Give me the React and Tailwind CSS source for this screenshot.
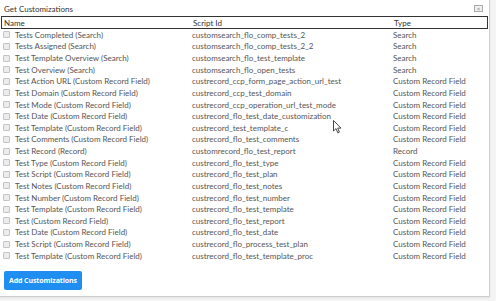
import React from "react";

const rows = [
  ["Tests Completed (Search)", "customsearch_flo_comp_tests_2", "Search"],
  ["Tests Assigned (Search)", "customsearch_flo_comp_tests_2_2", "Search"],
  ["Test Template Overview (Search)", "customsearch_flo_test_template", "Search"],
  ["Test Overview (Search)", "customsearch_flo_open_tests", "Search"],
  ["Test Action URL (Custom Record Field)", "custrecord_ccp_form_page_action_url_test", "Custom Record Field"],
  ["Test Domain (Custom Record Field)", "custrecord_ccp_test_domain", "Custom Record Field"],
  ["Test Mode (Custom Record Field)", "custrecord_ccp_operation_url_test_mode", "Custom Record Field"],
  ["Test Date (Custom Record Field)", "custrecord_flo_test_date_customization", "Custom Record Field"],
  ["Test Template (Custom Record Field)", "custrecord_test_template_c", "Custom Record Field"],
  ["Test Comments (Custom Record Field)", "custrecord_flo_test_comments", "Custom Record Field"],
  ["Test Record (Record)", "customrecord_flo_test_report", "Record"],
  ["Test Type (Custom Record Field)", "custrecord_flo_test_type", "Custom Record Field"],
  ["Test Script (Custom Record Field)", "custrecord_flo_test_plan", "Custom Record Field"],
  ["Test Notes (Custom Record Field)", "custrecord_flo_test_notes", "Custom Record Field"],
  ["Test Number (Custom Record Field)", "custrecord_flo_test_number", "Custom Record Field"],
  ["Test Template (Custom Record Field)", "custrecord_flo_test_template", "Custom Record Field"],
  ["Test (Custom Record Field)", "custrecord_flo_test_report", "Custom Record Field"],
  ["Test Date (Custom Record Field)", "custrecord_flo_test_date", "Custom Record Field"],
  ["Test Script (Custom Record Field)", "custrecord_flo_process_test_plan", "Custom Record Field"],
  ["Test Template (Custom Record Field)", "custrecord_flo_test_template_proc", "Custom Record Field"],
];

export default function App() {
  return (
    <div className="relative w-[496px] h-[301px] bg-[#f4f4f4] overflow-hidden text-[#555]" style={{ fontFamily: "Lato, 'Open Sans', sans-serif" }}>
      <div className="w-[490px] h-[297px] bg-white border-r border-b border-[#cfcfcf] shadow-[0_1px_2px_rgba(0,0,0,0.08)] flex flex-col">
        <div className="h-[16px] flex items-center justify-between pl-[4px] pr-[6px] pt-[1px] text-[8px] text-[#333]">
          <span>Get Customizations</span>
          <span className="w-[9px] h-[7px] border border-[#aaa] bg-[#f0f0f0] flex items-center justify-center text-[6px] leading-none text-[#777]">×</span>
        </div>
        <div className="mx-[1px] h-[13px] border border-[#333] grid grid-cols-[191px_201px_1fr] items-center text-[8px] text-[#333]">
          <span className="pl-[2px]">Name</span>
          <span>Script Id</span>
          <span>Type</span>
        </div>
        <div className="flex flex-col">
          {rows.map((r, i) => (
            <div key={i} className="h-[11.63px] grid grid-cols-[192px_201px_1fr] items-center text-[8px] leading-none">
              <div className="flex items-center">
                <span className="ml-[3px] mr-[5px] w-[7px] h-[7px] rounded-[1px] border border-[#c4c4c4] bg-[#ececec]"></span>
                <span>{r[0]}</span>
              </div>
              <span>{r[1]}</span>
              <span>{r[2]}</span>
            </div>
          ))}
        </div>
        <div className="pl-[4px] pt-[3px]">
          <button className="h-[19px] px-[5px] rounded-[2px] bg-[#1f8ef1] text-white text-[7px] font-bold tracking-[-0.1px]" style={{ fontFamily: "'Open Sans', sans-serif" }}>
            Add Customizations
          </button>
        </div>
      </div>
      <svg className="absolute left-[333px] top-[120px]" width="10" height="14" viewBox="0 0 10 14">
        <path d="M0.5 0.5 L0.5 11 L3 8.6 L4.8 12.8 L6.4 12.1 L4.7 8.1 L8 8.1 Z" fill="#fff" stroke="#333" strokeWidth="0.9" strokeLinejoin="round" />
      </svg>
    </div>
  );
}
